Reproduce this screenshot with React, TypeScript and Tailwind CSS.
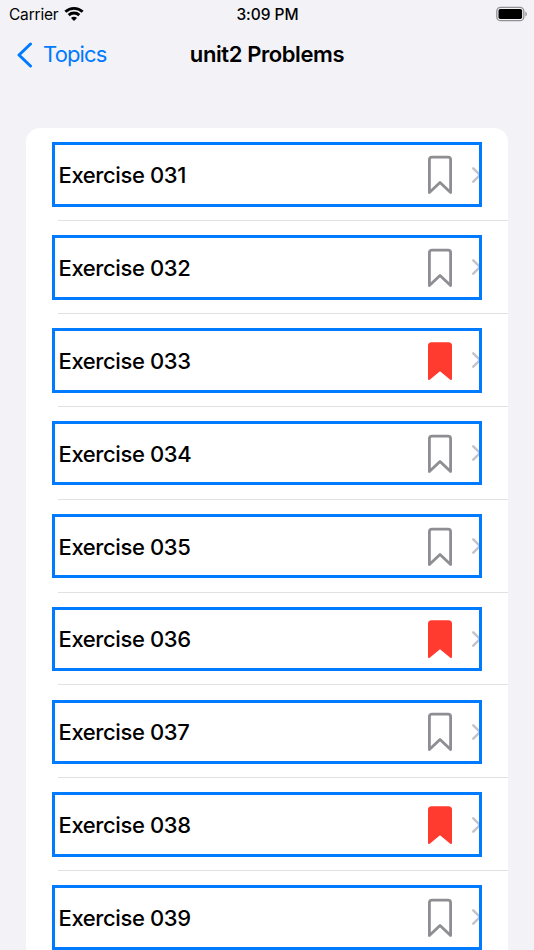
const exercises = [
  { name: 'Exercise 031', saved: false },
  { name: 'Exercise 032', saved: false },
  { name: 'Exercise 033', saved: true },
  { name: 'Exercise 034', saved: false },
  { name: 'Exercise 035', saved: false },
  { name: 'Exercise 036', saved: true },
  { name: 'Exercise 037', saved: false },
  { name: 'Exercise 038', saved: true },
  { name: 'Exercise 039', saved: false },
]

function StatusBar() {
  return (
    <div className="grid h-7 grid-cols-3 items-center pr-[7px] pl-[9px] text-[15.5px] leading-7">
      <div className="flex items-center gap-[6px]">
        <span className="pt-px tracking-[-0.2px]">Carrier</span>
        <svg viewBox="0 0 20 15" className="mb-[3px] h-[15px] w-5" fill="none" stroke="black" strokeWidth="2.9">
          <path d="M1.4 5.8a12.4 12.4 0 0 1 17.2 0" />
          <path d="M4.7 9.1a7.8 7.8 0 0 1 10.6 0" />
          <path d="M10 14.9 7 11.9a4.2 4.2 0 0 1 6 0z" fill="black" stroke="none" />
        </svg>
      </div>
      <span className="pt-px pr-px text-center font-medium tracking-[-0.05px]">3:09 PM</span>
      <svg viewBox="0 0 32 16" className="mb-[1px] h-4 w-8 justify-self-end">
        <rect x="1.8" y="1.3" width="27" height="13.4" rx="3.8" fill="none" stroke="#929196" strokeWidth="1.3" />
        <rect x="3.5" y="3" width="23.6" height="10" rx="1.8" />
        <path d="M30.3 5.6q1.6.8 1.6 2.4t-1.6 2.4z" fill="#929196" />
      </svg>
    </div>
  )
}

function Bookmark({ saved }: { saved: boolean }) {
  return (
    <svg viewBox="0 0 26 40" className="mt-px h-10 w-[26px]" strokeLinejoin="round">
      {saved ? (
        <path d="M4.5 1.2h17q3.5 0 3.5 3.5v33q0 2.2-2 .8L13 30.2l-10 8.3q-2 1.4-2-.8v-33q0-3.5 3.5-3.5z" fill="#ff3b30" />
      ) : (
        <path d="M5 2.2h16q2.6 0 2.6 2.6v32.7L13 27.4 2.4 37.5V4.8q0-2.6 2.6-2.6z" fill="none" stroke="#8e8e93" strokeWidth="2.8" />
      )}
    </svg>
  )
}

function ExerciseRow({ name, saved }: { name: string; saved: boolean }) {
  return (
    <li className="flex h-[92.86px] flex-col">
      <div className="mt-[14.4px] mr-[26px] ml-[26px] flex h-[64.4px] shrink-0 items-center overflow-hidden border-[3px] border-[#007aff] pl-[3.5px]">
        <span className="flex-1 pt-[2px] text-[22px] font-medium tracking-[-0.38px]">{name}</span>
        <Bookmark saved={saved} />
        <svg viewBox="0 0 10 18" className="-mr-[2px] ml-[18px] h-[18px] w-[10px]" fill="none" stroke="#c4c4c7" strokeWidth="2.5" strokeLinecap="round">
          <path d="m2.3 2.3 6.7 6.7-6.7 6.7" />
        </svg>
      </div>
      <div className="mt-[13.4px] ml-8 h-px shrink-0 bg-[#e1e1e3]" />
    </li>
  )
}

export default function App() {
  return (
    <div className="h-[950px] overflow-hidden bg-[#f2f2f7] font-['Inter',sans-serif] text-black">
      <StatusBar />
      <header className="grid h-[53px] grid-cols-[1fr_auto_1fr] items-center px-[17px]">
        <a href="#" className="flex items-center gap-[10px] text-[22px] tracking-[-0.85px] text-[#007aff]">
          <svg viewBox="0 0 16 26" className="h-[26px] w-4" fill="none" stroke="currentColor" strokeWidth="3" strokeLinecap="round" strokeLinejoin="round">
            <path d="M13.5 2 2 13l11.5 11" />
          </svg>
          Topics
        </a>
        <h1 className="text-[22px] font-semibold tracking-[-0.4px]">unit2 Problems</h1>
      </header>
      <ul className="mt-[47px] mr-[26px] ml-[26px] rounded-t-[14px] bg-white">
        {exercises.map((exercise) => (
          <ExerciseRow key={exercise.name} {...exercise} />
        ))}
      </ul>
    </div>
  )
}
